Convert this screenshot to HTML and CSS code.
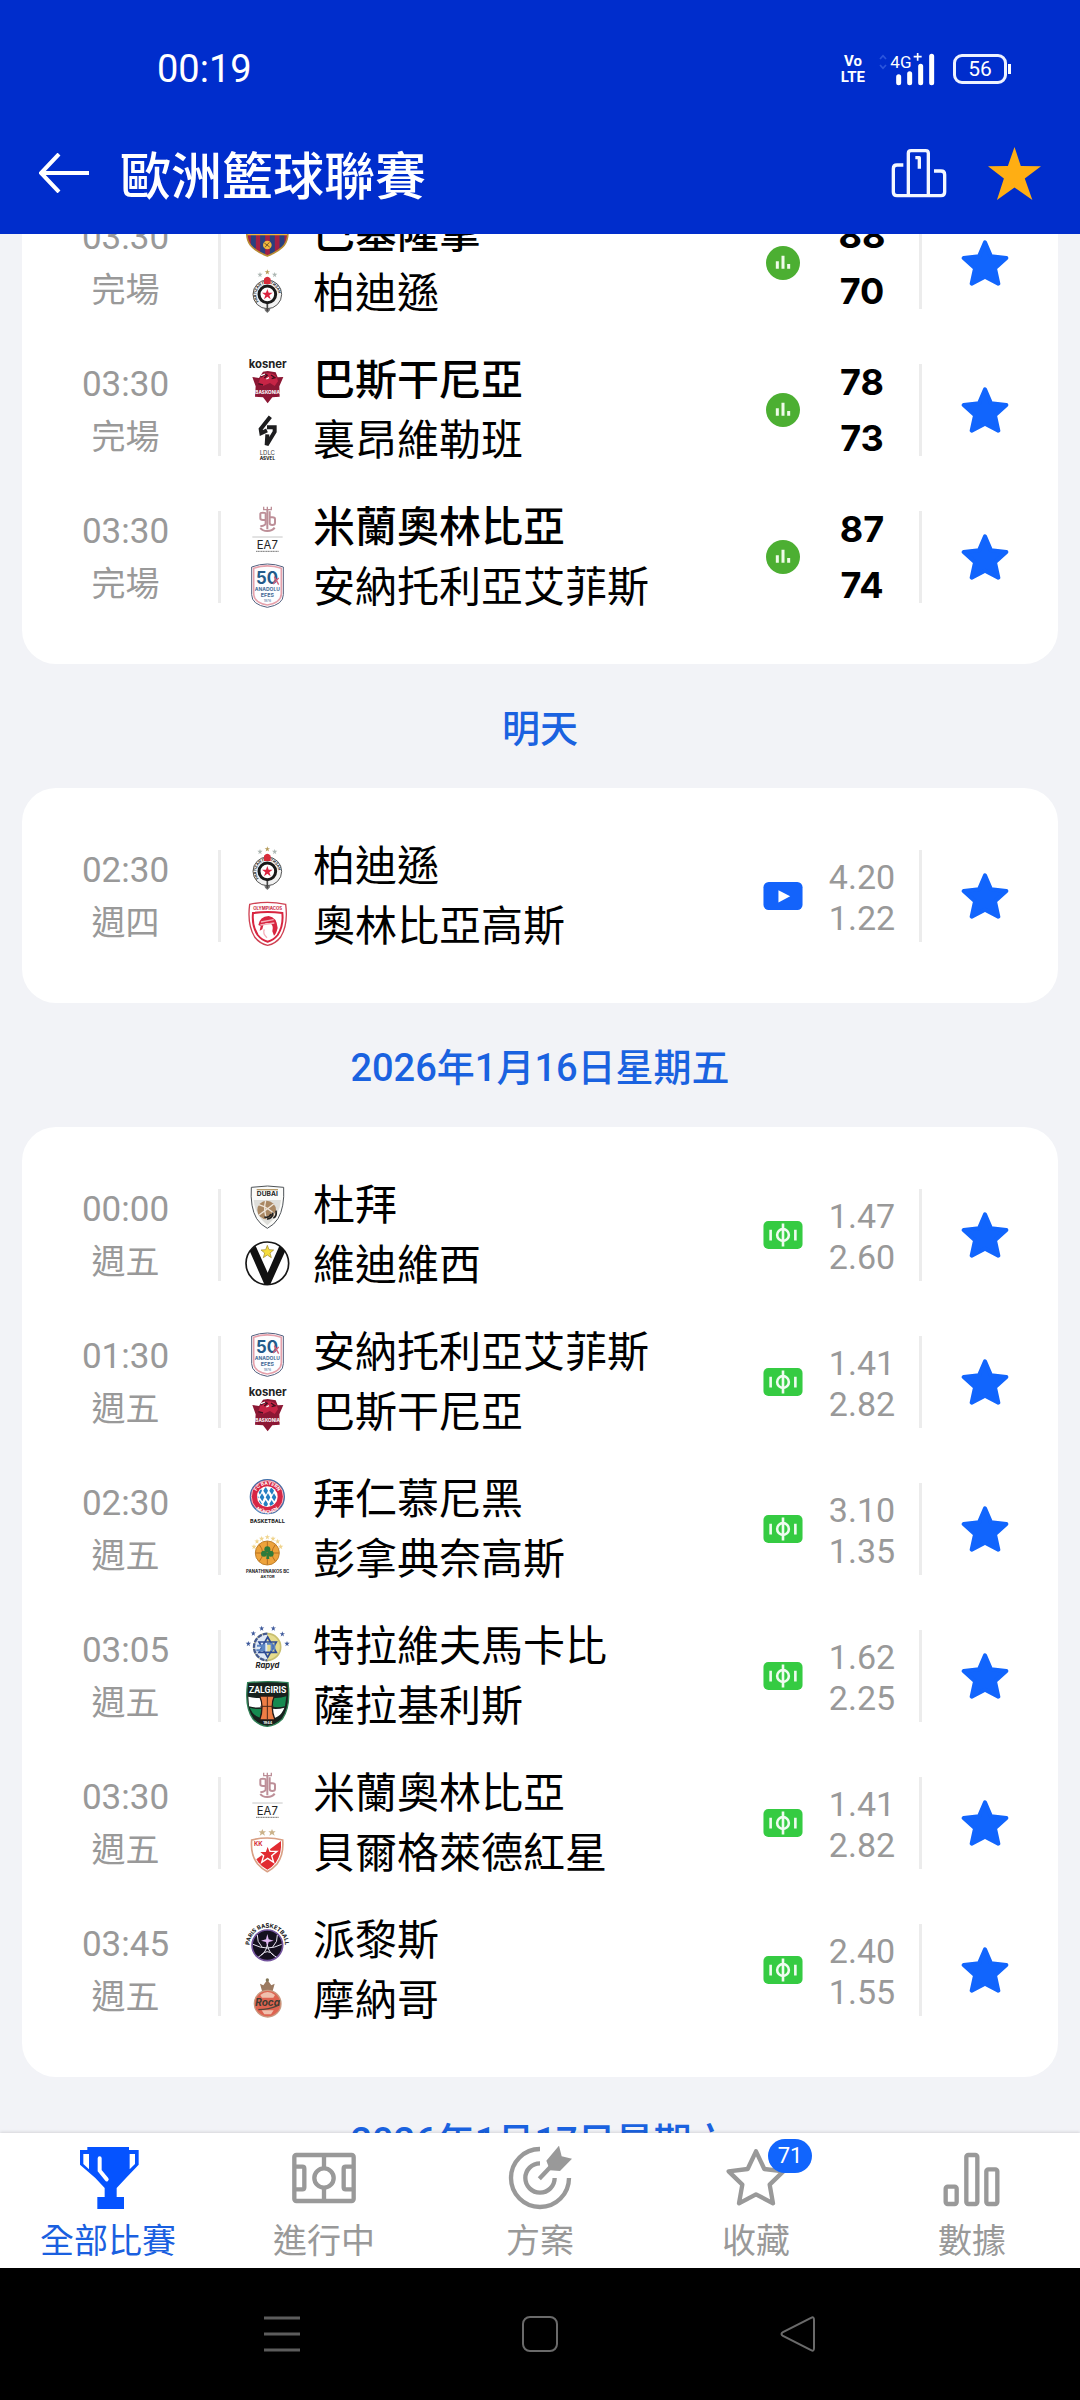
FILE: index.html
```html
<!DOCTYPE html>
<html lang="zh-Hant">
<head>
<meta charset="utf-8">
<meta name="viewport" content="width=device-width, initial-scale=1">
<title>歐洲籃球聯賽</title>
<link rel="stylesheet" href="styles.css">
</head>
<body>
<svg class="sprite" aria-hidden="true">
  <defs>
    <path id="tiny-star" d="M0-8 2-2.500 8-2.500 3 1.500 5 7.500 0 4-5 7.500-3 1.500-8-2.500-2-2.500Z"/>
    <path id="arc-paris" d="M21 105A53 53 0 1 1 113 105"/>
    <path id="arc-bayern-top" d="M31 56A36 36 0 0 1 103 56"/>
    <path id="arc-bayern-bottom" d="M20 60A47 47 0 0 0 114 60"/>
    <path id="arc-partizan" d="M41 100A33 33 0 1 1 93 100"/>
    <clipPath id="clip-barca"><path d="M24 0Q67 14 110 0L130 26Q122 40 128 54C132 92 116 112 67 132C18 112 2 92 6 54Q12 40 4 26Z"/></clipPath>
    <clipPath id="clip-bayern"><circle cx="67" cy="56" r="29"/></clipPath>
    <clipPath id="clip-zalgiris"><path d="M10 8Q67 2 126 8Q136 78 108 112Q90 128 67 130Q44 128 28 112Q0 78 10 8Z"/></clipPath>
  </defs>
  <symbol id="star" viewBox="0 0 144 144">
    <path d="M72 10 90 52 136 57 102 88 112 134 72 113 32 134 42 88 8 57 54 52Z" fill="currentColor" stroke="currentColor" stroke-width="12" stroke-linejoin="round"/>
  </symbol>
  <symbol id="stats" viewBox="0 0 102 102">
    <circle cx="51" cy="51" r="51" fill="#4caf32"/>
    <path d="M34 46v22M51 29v39M68 54v14" stroke="#effbe9" stroke-width="9"/>
  </symbol>
  <symbol id="pitch" viewBox="0 0 120 86">
    <rect width="120" height="86" rx="15" fill="#35cb42"/>
    <path d="M22 27v33M98 27v33M60 8v70" stroke="#effcf0" stroke-width="8"/>
    <circle cx="60" cy="43" r="18" fill="none" stroke="#effcf0" stroke-width="8"/>
  </symbol>
  <symbol id="video" viewBox="0 0 120 86">
    <rect width="120" height="86" rx="16" fill="#1363fb"/>
    <path d="M46 25 82 44 46 63Z" fill="#fff"/>
  </symbol>
</svg>

<header class="top">
  <div class="status">
    <span class="clock">00:19</span>
    <div class="status-icons">
      <span class="volte"><span>Vo</span><span>LTE</span></span>
      <svg class="signal" viewBox="0 0 168 96" role="img" aria-label="4G+">
        <path d="M3 18l9-10 9 10M3 36l9 10 9-10" fill="none" stroke="#2b55dc" stroke-width="5"/>
        <text class="signal-text" x="34" y="44" font-size="51">4G</text>
        <path d="M104 11h24M116 0v23" stroke="#fff" stroke-width="5"/>
        <path d="M59 71v18M92 62v27M125 40v49M158 10v79" stroke="#fff" stroke-width="15" stroke-linecap="round"/>
      </svg>
      <span class="battery">56</span>
    </div>
  </div>
  <div class="title-bar">
    <button aria-label="返回"><svg class="back" viewBox="0 0 50 40"><path d="M20 1 2 20 20 39M3 20H50" fill="none" stroke="#fff" stroke-width="4"/></svg></button>
    <h1>歐洲籃球聯賽</h1>
    <button aria-label="排名"><svg class="podium" viewBox="0 0 168 153"><g fill="none" stroke="#f4f7ff" stroke-width="10" stroke-linejoin="round"><path d="M37 51H18Q7 51 7 62V132Q7 143 18 143H150Q161 143 161 132V80Q161 69 150 69H129"/><path d="M52 143V16Q52 8 60 8H104Q112 8 112 16V143"/><path d="M73 29H85V62"/></g></svg></button>
    <button aria-label="收藏聯賽"><svg class="league-star" viewBox="0 0 160 160"><path d="M80 0 99 57 160 58 111 95 134 160 80 122 27 160 48 95 0 58 60 57Z" fill="#ffae13"/></svg></button>
  </div>
</header>

<main class="feed">
  <section class="card feed-start">
    <ul>
      <li class="match">
        <div class="when"><time>03:30</time><span>完場</span></div>
        <div class="logos">
          <svg viewBox="0 0 138 138">
            <g clip-path="url(#clip-barca)">
              <path fill="#a32045" d="M0 0h138v138H0z"/>
              <path stroke="#29407f" stroke-width="15" d="M25 64v74M53 64v74M82 64v74M111 64v74"/>
              <path fill="#efb73b" d="M0 44h138v26H0z"/>
              <path d="M28 58h78" stroke="#23356f" stroke-width="8" stroke-dasharray="13 6"/>
              <circle cx="67" cy="99" r="13" fill="#f0b93c"/>
              <path d="M58 93l16 12M60 106l13-15" stroke="#79582a" stroke-width="3"/>
            </g>
            <path d="M24 0Q67 14 110 0L130 26Q122 40 128 54C132 92 116 112 67 132C18 112 2 92 6 54Q12 40 4 26Z" fill="none" stroke="#b98c32" stroke-width="5"/>
          </svg>
          <svg viewBox="0 0 138 138">
            <use href="#tiny-star" x="45" y="20" fill="#aeb8b4"/><use href="#tiny-star" x="89" y="20" fill="#aeb8b4"/><use href="#tiny-star" x="67" y="12" fill="#b59b5b"/>
            <path d="M56 116h22l-4 12-7 7-7-7Z" fill="#7b7b7b"/>
            <circle cx="67" cy="79" r="43" fill="#f2f2f2" stroke="#555" stroke-width="3"/>
            <text class="logo-text" font-size="11" font-weight="700" fill="#222"><textPath href="#arc-partizan">PARTIZAN ПАРТИЗАН</textPath></text>
            <circle cx="67" cy="79" r="25" fill="#fff" stroke="#191919" stroke-width="9"/>
            <path d="M67 63 71 74 83 74 73 82 77 94 67 86 57 94 61 82 51 74 63 74Z" fill="#da2440"/>
            <path d="M57 32q10-12 20 0v16H57Z" fill="#d72c3a"/>
            <path d="M67 108v22" stroke="#444" stroke-width="5"/>
          </svg>
        </div>
        <div class="teams"><strong>巴塞隆拿</strong><span>柏迪遜</span></div>
        <svg class="badge-icon stats"><use href="#stats"/></svg>
        <div class="score"><span>88</span><span>70</span></div>
        <div class="favourite"><button aria-label="收藏"><svg><use href="#star"/></svg></button></div>
      </li>
      <li class="match">
        <div class="when"><time>03:30</time><span>完場</span></div>
        <div class="logos">
          <svg viewBox="0 0 138 138">
            <text class="logo-text" x="68" y="28" font-size="34" font-weight="700" fill="#222" text-anchor="middle">kosner</text>
            <path d="M22 54 42 57 54 38 68 36 92 40 98 55 115 54 103 82 104 113 82 115 68 133 54 115 30 113 32 82Z" fill="#8c1734"/>
            <path d="M46 56q10-15 28-13 22 2 25 24l-10 14-14-9-23 10-12-8Z" fill="#c72546"/>
            <path d="M48 54q12-11 19-5l-9 8M78 48l12 8-10 3M40 74l14 4" fill="none" stroke="#401020" stroke-width="4"/>
            <path d="M48 50l12-5M64 60l8-4" stroke="#fff" stroke-width="4"/>
            <text class="logo-text" x="68" y="105" font-size="14" font-weight="700" fill="#fff" text-anchor="middle">BASKONIA</text>
          </svg>
          <svg viewBox="0 0 138 138">
            <path d="M76 5 47 42 49 54 66 46" fill="none" stroke="#1d1d1f" stroke-width="12"/>
            <path d="M66 37H89V50L65 90 67 58" fill="none" stroke="#1d1d1f" stroke-width="12"/>
            <text class="logo-text" x="67" y="120" font-size="18" fill="#444" text-anchor="middle">LDLC</text>
            <text class="logo-text" x="67" y="136" font-size="14" font-weight="700" fill="#111" text-anchor="middle">ASVEL</text>
          </svg>
        </div>
        <div class="teams"><strong>巴斯干尼亞</strong><span>裏昂維勒班</span></div>
        <svg class="badge-icon stats"><use href="#stats"/></svg>
        <div class="score"><span>78</span><span>73</span></div>
        <div class="favourite"><button aria-label="收藏"><svg><use href="#star"/></svg></button></div>
      </li>
      <li class="match">
        <div class="when"><time>03:30</time><span>完場</span></div>
        <div class="logos">
          <svg viewBox="0 0 138 138">
            <g fill="none" stroke="#bd8f98" stroke-width="6">
              <path d="M62 36V23q0-3-8-3t-8 3v14q0 5 8 5h8v-8M62 36v16q0 7-16 9"/>
              <path d="M74 16v35q0 6 8 6t8-6V39q0-5-8-5h-8"/>
              <path d="M67 12v58M46 66q6 9 21 9t22-10"/>
              <path d="M56 2v9h23V2M67 2v10" stroke-width="4"/>
            </g>
            <path d="M22 93h91" stroke="#aaa" stroke-width="2"/>
            <text class="logo-text" x="67" y="128" font-size="34" fill="#222" text-anchor="middle">EA7</text>
            <path d="M33 136h68" stroke="#777" stroke-width="3" stroke-dasharray="4 1"/>
          </svg>
          <svg viewBox="0 0 138 138">
            <path d="M20 15Q67-3 115 15V98Q115 128 67 136Q20 128 20 98Z" fill="#fff" stroke="#54607f" stroke-width="3"/>
            <path d="M26 19Q67 4 109 19V96Q108 122 67 129Q27 122 26 96Z" fill="#fcfdff" stroke="#e5a0ab" stroke-width="5"/>
            <text class="logo-text" x="66" y="67" font-size="50" font-weight="700" fill="#245b8a" text-anchor="middle">50</text>
            <path d="M88 44 101 68M84 66 101 48" stroke="#d55d78" stroke-width="4"/>
            <text class="logo-text" x="67" y="88" font-size="15" font-weight="700" fill="#456a96" text-anchor="middle">ANADOLU</text>
            <text class="logo-text" x="67" y="106" font-size="16" font-weight="700" fill="#456a96" text-anchor="middle">EFES</text>
            <text class="logo-text" x="67" y="121" font-size="10" fill="#456a96" text-anchor="middle">1976</text>
          </svg>
        </div>
        <div class="teams"><strong>米蘭奧林比亞</strong><span>安納托利亞艾菲斯</span></div>
        <svg class="badge-icon stats"><use href="#stats"/></svg>
        <div class="score"><span>87</span><span>74</span></div>
        <div class="favourite"><button aria-label="收藏"><svg><use href="#star"/></svg></button></div>
      </li>
    </ul>
  </section>

  <h2>明天</h2>
  <section class="card">
    <ul>
      <li class="match">
        <div class="when"><time>02:30</time><span>週四</span></div>
        <div class="logos">
          <svg viewBox="0 0 138 138">
            <use href="#tiny-star" x="45" y="20" fill="#aeb8b4"/><use href="#tiny-star" x="89" y="20" fill="#aeb8b4"/><use href="#tiny-star" x="67" y="12" fill="#b59b5b"/>
            <path d="M56 116h22l-4 12-7 7-7-7Z" fill="#7b7b7b"/>
            <circle cx="67" cy="79" r="43" fill="#f2f2f2" stroke="#555" stroke-width="3"/>
            <text class="logo-text" font-size="11" font-weight="700" fill="#222"><textPath href="#arc-partizan">PARTIZAN ПАРТИЗАН</textPath></text>
            <circle cx="67" cy="79" r="25" fill="#fff" stroke="#191919" stroke-width="9"/>
            <path d="M67 63 71 74 83 74 73 82 77 94 67 86 57 94 61 82 51 74 63 74Z" fill="#da2440"/>
            <path d="M57 32q10-12 20 0v16H57Z" fill="#d72c3a"/>
            <path d="M67 108v22" stroke="#444" stroke-width="5"/>
          </svg>
          <svg viewBox="0 0 138 138">
            <path d="M14 10Q67-2 122 10Q130 70 107 108Q92 128 68 133Q44 128 29 108Q6 70 14 10Z" fill="#fff" stroke="#cf4253" stroke-width="4"/>
            <text class="logo-text" x="68" y="26" font-size="13" font-weight="700" fill="#c9253c" text-anchor="middle">OLYMPIACOS</text>
            <path d="M24 36Q68 30 112 36Q116 74 98 102Q86 117 68 122Q50 117 38 102Q20 74 24 36Z" fill="#fff" stroke="#d82640" stroke-width="6"/>
            <path d="M40 72q4-25 31-27 24 3 27 36-4 17-11 23l-5-13q5-20-8-24-12-4-19 6l-3 12-8 4 3-14Z" fill="#d82640"/>
            <path d="M48 63l38-7M46 72l42-6M58 85q-6 12 8 25" fill="none" stroke="#f4b0ba" stroke-width="4"/>
          </svg>
        </div>
        <div class="teams"><span>柏迪遜</span><span>奧林比亞高斯</span></div>
        <svg class="badge-icon"><use href="#video"/></svg>
        <div class="odds"><span>4.20</span><span>1.22</span></div>
        <div class="favourite"><button aria-label="收藏"><svg><use href="#star"/></svg></button></div>
      </li>
    </ul>
  </section>

  <h2>2026年1月16日星期五</h2>
  <section class="card">
    <ul>
      <li class="match">
        <div class="when"><time>00:00</time><span>週五</span></div>
        <div class="logos">
          <svg viewBox="0 0 138 138">
            <path d="M19 10Q68 2 116 10Q119 70 99 104Q88 122 67 133Q46 122 35 104Q15 70 19 10Z" fill="#fbfbf9" stroke="#4d5257" stroke-width="3"/>
            <path d="M35 17h64" stroke="#b79d6d" stroke-width="4"/>
            <text class="logo-text" x="67" y="36" font-size="20" font-weight="700" fill="#222" text-anchor="middle">DUBAI</text>
            <path d="M26 48h82q-3 44-41 76-38-32-41-76Z" fill="#dededa"/>
            <circle cx="65" cy="78" r="28" fill="#a98762"/>
            <path d="M41 62q30 9 51 32M62 50q-8 29 4 56M86 60Q66 76 42 93" fill="none" stroke="#efe5d8" stroke-width="4"/>
            <path d="M58 99q14 4 20-9M84 86q-3 20-18 19M93 80q3 18-8 22" fill="none" stroke="#222" stroke-width="5"/>
          </svg>
          <svg viewBox="0 0 138 138">
            <circle cx="67" cy="70" r="64" fill="#fff" stroke="#171717" stroke-width="5"/>
            <path d="M14 33 32 18 68 98 103 18 121 33 75 135H59Z" fill="#111"/>
            <path d="M67 16 72 29 86 30 75 39 79 53 67 45 55 53 59 39 48 30 62 29Z" fill="#f6dd3c" stroke="#9b8426" stroke-width="2"/>
          </svg>
        </div>
        <div class="teams"><span>杜拜</span><span>維迪維西</span></div>
        <svg class="badge-icon"><use href="#pitch"/></svg>
        <div class="odds"><span>1.47</span><span>2.60</span></div>
        <div class="favourite"><button aria-label="收藏"><svg><use href="#star"/></svg></button></div>
      </li>
      <li class="match">
        <div class="when"><time>01:30</time><span>週五</span></div>
        <div class="logos">
          <svg viewBox="0 0 138 138">
            <path d="M20 15Q67-3 115 15V98Q115 128 67 136Q20 128 20 98Z" fill="#fff" stroke="#54607f" stroke-width="3"/>
            <path d="M26 19Q67 4 109 19V96Q108 122 67 129Q27 122 26 96Z" fill="#fcfdff" stroke="#e5a0ab" stroke-width="5"/>
            <text class="logo-text" x="66" y="67" font-size="50" font-weight="700" fill="#245b8a" text-anchor="middle">50</text>
            <path d="M88 44 101 68M84 66 101 48" stroke="#d55d78" stroke-width="4"/>
            <text class="logo-text" x="67" y="88" font-size="15" font-weight="700" fill="#456a96" text-anchor="middle">ANADOLU</text>
            <text class="logo-text" x="67" y="106" font-size="16" font-weight="700" fill="#456a96" text-anchor="middle">EFES</text>
            <text class="logo-text" x="67" y="121" font-size="10" fill="#456a96" text-anchor="middle">1976</text>
          </svg>
          <svg viewBox="0 0 138 138">
            <text class="logo-text" x="68" y="28" font-size="34" font-weight="700" fill="#222" text-anchor="middle">kosner</text>
            <path d="M22 54 42 57 54 38 68 36 92 40 98 55 115 54 103 82 104 113 82 115 68 133 54 115 30 113 32 82Z" fill="#8c1734"/>
            <path d="M46 56q10-15 28-13 22 2 25 24l-10 14-14-9-23 10-12-8Z" fill="#c72546"/>
            <path d="M48 54q12-11 19-5l-9 8M78 48l12 8-10 3M40 74l14 4" fill="none" stroke="#401020" stroke-width="4"/>
            <path d="M48 50l12-5M64 60l8-4" stroke="#fff" stroke-width="4"/>
            <text class="logo-text" x="68" y="105" font-size="14" font-weight="700" fill="#fff" text-anchor="middle">BASKONIA</text>
          </svg>
        </div>
        <div class="teams"><span>安納托利亞艾菲斯</span><span>巴斯干尼亞</span></div>
        <svg class="badge-icon"><use href="#pitch"/></svg>
        <div class="odds"><span>1.41</span><span>2.82</span></div>
        <div class="favourite"><button aria-label="收藏"><svg><use href="#star"/></svg></button></div>
      </li>
      <li class="match">
        <div class="when"><time>02:30</time><span>週五</span></div>
        <div class="logos">
          <svg viewBox="0 0 138 138">
            <circle cx="67" cy="56" r="51" fill="#d72645" stroke="#4271aa" stroke-width="4"/>
            <circle cx="67" cy="56" r="48" fill="none" stroke="#fff" stroke-width="2"/>
            <text class="logo-text" font-size="14" font-weight="700" fill="#fff"><textPath href="#arc-bayern-top" startOffset="50%" text-anchor="middle">FC BAYERN</textPath></text>
            <text class="logo-text" font-size="14" font-weight="700" fill="#fff"><textPath href="#arc-bayern-bottom" startOffset="50%" text-anchor="middle">MÜNCHEN</textPath></text>
            <circle cx="67" cy="56" r="31" fill="#fff"/>
            <g clip-path="url(#clip-bayern)" fill="#247fc2">
              <path d="M44 26l7 12-6 12-8-12ZM62 26l7 12-6 12-8-12ZM80 26l7 12-6 12-8-12ZM51 46l7 12-6 12-8-12ZM69 46l7 12-6 12-8-12ZM87 46l7 12-6 12-8-12ZM34 46l7 12-6 12-8-12ZM44 66l7 12-6 12-8-12ZM62 66l7 12-6 12-8-12ZM80 66l7 12-6 12-8-12Z"/>
            </g>
            <text class="logo-text-plain" x="67" y="134" font-size="17" font-weight="700" fill="#222" text-anchor="middle">BASKETBALL</text>
          </svg>
          <svg viewBox="0 0 138 138">
            <g fill="#f0d48c"><use href="#tiny-star" x="27" y="38"/><use href="#tiny-star" x="36" y="22"/><use href="#tiny-star" x="50" y="14"/><use href="#tiny-star" x="67" y="9"/><use href="#tiny-star" x="84" y="14"/><use href="#tiny-star" x="98" y="22"/><use href="#tiny-star" x="107" y="38"/></g>
            <circle cx="67" cy="57" r="36" fill="#eea33b" stroke="#bf812d" stroke-width="3"/>
            <path d="M67 22v70M32 57h70M43 32q20 25 0 50M91 32q-20 25 0 50" fill="none" stroke="#b56e20" stroke-width="3"/>
            <g fill="#2f7b3b"><circle cx="67" cy="46" r="9"/><circle cx="57" cy="59" r="9"/><circle cx="77" cy="59" r="9"/><path d="M65 56h5l3 19h-9Z"/></g>
            <text class="logo-text" x="68" y="118" font-size="13" font-weight="700" fill="#222" text-anchor="middle">PANATHINAIKOS BC</text>
            <text class="logo-text" x="68" y="133" font-size="12" font-weight="700" fill="#222" text-anchor="middle">AKTOR</text>
          </svg>
        </div>
        <div class="teams"><span>拜仁慕尼黑</span><span>彭拿典奈高斯</span></div>
        <svg class="badge-icon"><use href="#pitch"/></svg>
        <div class="odds"><span>3.10</span><span>1.35</span></div>
        <div class="favourite"><button aria-label="收藏"><svg><use href="#star"/></svg></button></div>
      </li>
      <li class="match">
        <div class="when"><time>03:05</time><span>週五</span></div>
        <div class="logos">
          <svg viewBox="0 0 138 138">
            <g fill="#3f5a9c"><use href="#tiny-star" x="10" y="56"/><use href="#tiny-star" x="25" y="25"/><use href="#tiny-star" x="50" y="10"/><use href="#tiny-star" x="85" y="10"/><use href="#tiny-star" x="112" y="27"/><use href="#tiny-star" x="126" y="56"/></g>
            <circle cx="67" cy="66" r="40" fill="#e6dc8e" stroke="#c9bf6f" stroke-width="5"/>
            <path d="M67 26A40 40 0 0 0 67 106Z" fill="#dfe8f5"/>
            <path d="M67 26A40 40 0 0 0 67 106" fill="none" stroke="#455a8e" stroke-width="7" stroke-dasharray="14 3"/>
            <path d="M68 36 94 82H42ZM68 97 42 51H94Z" fill="none" stroke="#2f4b93" stroke-width="5"/>
            <path d="M36 62h16v14H34M58 56v22M66 56h14v22M88 56v20" fill="none" stroke="#5d86c4" stroke-width="6"/>
            <text class="logo-text" x="67" y="130" font-size="23" font-weight="700" font-style="italic" fill="#222" text-anchor="middle">Rapyd</text>
          </svg>
          <svg viewBox="0 0 138 138">
            <path d="M8 5Q67-1 129 5Q138 78 112 114Q92 134 67 136Q42 134 24 114Q-2 78 8 5Z" fill="#17211d" stroke="#2f8055" stroke-width="4"/>
            <g clip-path="url(#clip-zalgiris)">
              <path d="M10 47q30 8 57 1v26q-30 10-55 2Z" fill="#fff"/><path d="M67 48q30 7 57-2l-4 30q-26 6-53-2Z" fill="#168a50"/>
              <path d="M14 80q26 8 53 0v34Q28 114 14 80Z" fill="#168a50"/><path d="M67 80q26 8 51 0-12 34-51 34Z" fill="#fff"/>
              <path d="M44 45h44q-14 32 2 72H44q14-40 0-72Z" fill="#ed7d45" stroke="#231a17" stroke-width="4"/>
              <path d="M67 45v70M46 76h40" stroke="#4c2a1c" stroke-width="3"/>
            </g>
            <text class="logo-text-plain" x="68" y="36" font-size="26" font-weight="700" fill="#fff" text-anchor="middle">ZALGIRIS</text>
            <text class="logo-text" x="68" y="129" font-size="11" font-weight="700" fill="#fff" text-anchor="middle">1944</text>
          </svg>
        </div>
        <div class="teams"><span>特拉維夫馬卡比</span><span>薩拉基利斯</span></div>
        <svg class="badge-icon"><use href="#pitch"/></svg>
        <div class="odds"><span>1.62</span><span>2.25</span></div>
        <div class="favourite"><button aria-label="收藏"><svg><use href="#star"/></svg></button></div>
      </li>
      <li class="match">
        <div class="when"><time>03:30</time><span>週五</span></div>
        <div class="logos">
          <svg viewBox="0 0 138 138">
            <g fill="none" stroke="#bd8f98" stroke-width="6">
              <path d="M62 36V23q0-3-8-3t-8 3v14q0 5 8 5h8v-8M62 36v16q0 7-16 9"/>
              <path d="M74 16v35q0 6 8 6t8-6V39q0-5-8-5h-8"/>
              <path d="M67 12v58M46 66q6 9 21 9t22-10"/>
              <path d="M56 2v9h23V2M67 2v10" stroke-width="4"/>
            </g>
            <path d="M22 93h91" stroke="#aaa" stroke-width="2"/>
            <text class="logo-text" x="67" y="128" font-size="34" fill="#222" text-anchor="middle">EA7</text>
            <path d="M33 136h68" stroke="#777" stroke-width="3" stroke-dasharray="4 1"/>
          </svg>
          <svg viewBox="0 0 138 138">
            <path d="M52 3 55 10 63 10 57 15 60 23 52 18 44 23 47 15 41 10 49 10ZM81 3 84 10 92 10 86 15 89 23 81 18 73 23 76 15 70 10 78 10Z" fill="#cbb28a"/>
            <path d="M20 36Q67 24 113 36Q117 80 96 108Q84 122 67 131Q50 122 38 108Q16 80 20 36Z" fill="#fff" stroke="#d9a085" stroke-width="5"/>
            <path d="M108 39Q111 78 92 104Q82 117 67 125Q50 117 40 103L34 94Z" fill="#e12b31"/>
            <path d="M68 51 75 70 96 70 80 83 86 103 68 91 50 103 56 83 40 70 61 70Z" fill="#e12b31" stroke="#fff" stroke-width="4"/>
            <text class="logo-text" x="40" y="55" font-size="18" font-weight="700" fill="#d42a33" text-anchor="middle">KK</text>
          </svg>
        </div>
        <div class="teams"><span>米蘭奧林比亞</span><span>貝爾格萊德紅星</span></div>
        <svg class="badge-icon"><use href="#pitch"/></svg>
        <div class="odds"><span>1.41</span><span>2.82</span></div>
        <div class="favourite"><button aria-label="收藏"><svg><use href="#star"/></svg></button></div>
      </li>
      <li class="match">
        <div class="when"><time>03:45</time><span>週五</span></div>
        <div class="logos">
          <svg viewBox="0 0 138 138">
            <text class="logo-text" font-size="17" font-weight="700" fill="#141414"><textPath href="#arc-paris" startOffset="50%" text-anchor="middle">PARIS BASKETBALL</textPath></text>
            <circle cx="67" cy="79" r="46" fill="#15101f" stroke="#73549d" stroke-width="5"/>
            <path d="M67 45l4 16 15 4-15 4-4 16-4-16-15-4 15-4Z" fill="#e0b8f2"/>
            <path d="M24 76q43 22 86 0M37 48q-2 20 14 36M97 48q2 20-14 36M67 78q-5 26-27 36M67 78q5 26 27 36M48 108q19-20 38 0" fill="none" stroke="#e8e5f0" stroke-width="3"/>
          </svg>
          <svg viewBox="0 0 138 138">
            <path d="M45 26l10 5 12-17 12 17 10-5-6 22H51Z" fill="#9c7a61"/><circle cx="67" cy="15" r="5" fill="#817557"/>
            <circle cx="68" cy="86" r="40" fill="#de6350" stroke="#c99a80" stroke-width="4"/>
            <path d="M46 60q22-18 44 0l-5 8H51ZM50 106h36l-8 12H58Z" fill="#f0c0ad"/>
            <path d="M40 104Q72 104 98 92" fill="none" stroke="#51463a" stroke-width="4"/>
            <text class="logo-text" x="68" y="94" font-size="30" font-weight="700" font-style="italic" fill="#403b31" text-anchor="middle">Roca</text>
          </svg>
        </div>
        <div class="teams"><span>派黎斯</span><span>摩納哥</span></div>
        <svg class="badge-icon"><use href="#pitch"/></svg>
        <div class="odds"><span>2.40</span><span>1.55</span></div>
        <div class="favourite"><button aria-label="收藏"><svg><use href="#star"/></svg></button></div>
      </li>
    </ul>
  </section>

  <h2>2026年1月17日星期六</h2>
</main>

<nav class="tabs">
  <a class="tab active" href="#all">
    <svg viewBox="0 0 192 192"><path d="M34 3H159V12H188V56L150 96 122 126V153H144V189H64V153H86V126L58 96 12 56V12H34Z" fill="#0553ff"/><path d="M22 24H39V70L22 54ZM161 24H177V54L161 70Z" fill="#fff"/><path d="M71 37V74L92 100" fill="none" stroke="#fff" stroke-width="12" stroke-linecap="round"/></svg>
    <span>全部比賽</span>
  </a>
  <a class="tab" href="#live">
    <svg viewBox="0 0 192 192"><g fill="none" stroke="#999" stroke-width="13"><rect x="7" y="27" width="178" height="138" rx="6"/><path d="M96 27V63M96 129V165M7 62H31Q37 62 37 68V124Q37 130 31 130H7M185 62H161Q155 62 155 68V124Q155 130 161 130H185"/><circle cx="96" cy="96" r="29"/></g></svg>
    <span>進行中</span>
  </a>
  <a class="tab" href="#tips">
    <svg viewBox="0 0 192 192"><g fill="none" stroke="#999" stroke-width="13"><path d="M96 9A87 87 0 1 0 183 96"/><path d="M96 52A44 44 0 1 0 140 96"/><path d="M94 98 128 62"/></g><path d="M115 44 153-1 161 31 192 38 156 75 126 73Z" fill="#999"/></svg>
    <span>方案</span>
  </a>
  <a class="tab" href="#favourites">
    <div class="tab-icon">
      <svg viewBox="0 0 192 192"><path d="M96 16 121 69 178 76 137 116 147 172 96 145 45 172 55 116 14 76 71 69Z" fill="none" stroke="#999" stroke-width="13" stroke-linejoin="round"/></svg>
      <span class="count">71</span>
    </div>
    <span>收藏</span>
  </a>
  <a class="tab" href="#data">
    <svg viewBox="0 0 192 192"><g fill="none" stroke="#999" stroke-width="13"><rect x="17" y="122" width="33" height="52" rx="6"/><rect x="79" y="27" width="33" height="147" rx="6"/><rect x="139" y="70" width="33" height="104" rx="6"/></g></svg>
    <span>數據</span>
  </a>
</nav>

<footer class="system">
  <button aria-label="最近"><svg viewBox="0 0 36 36"><path d="M0 2H36M0 18H36M0 34H36" stroke="#5c5c5c" stroke-width="3"/></svg></button>
  <button aria-label="主畫面"><svg viewBox="0 0 36 36"><rect x="1" y="1" width="34" height="34" rx="7" fill="none" stroke="#6a6a6a" stroke-width="2"/></svg></button>
  <button aria-label="上一頁"><svg viewBox="0 0 36 36"><path d="M31 2Q34 0 34 4V32Q34 36 31 34L3 20Q0 18 3 16Z" fill="none" stroke="#6a6a6a" stroke-width="2"/></svg></button>
</footer>
</body>
</html>
```

FILE: styles.css
```css
* { box-sizing: border-box; }

body {
  margin: 0;
  height: 100vh;
  display: flex;
  flex-direction: column;
  overflow: hidden;
  background: #f2f3f7;
  color: #000;
  font-family: Roboto, "Noto Sans CJK TC", sans-serif;
}

.sprite { position: absolute; width: 0; height: 0; }
.logo-text { font-family: Inter, sans-serif; }
.logo-text-plain { font-family: Roboto, sans-serif; }

button {
  border: 0;
  padding: 0;
  background: none;
  color: inherit;
  cursor: pointer;
}
svg { display: block; flex: none; }
ul { list-style: none; margin: 0; padding: 0; }

/* Header */
.top { flex: none; background: #002dcc; color: #fff; }

.status {
  display: flex;
  justify-content: space-between;
  align-items: center;
  height: 138px;
  padding: 0 68px 0 157px;
}
.clock { font-size: 38px; line-height: 40px; }
.status-icons { display: flex; align-items: center; }
.volte {
  display: flex;
  flex-direction: column;
  font: 700 15px/16px Roboto, sans-serif;
}
.volte span { text-align: center; }
.signal { width: 56px; height: 32px; margin: 0 18px 0 14px; overflow: visible; }
.signal-text { fill: #fff; font-family: Roboto, sans-serif; }
.battery {
  position: relative;
  width: 54px;
  height: 30px;
  border: 3px solid #eef2ff;
  border-radius: 9px;
  font-size: 21px;
  line-height: 24px;
  text-align: center;
  margin-right: 5px;
}
.battery::after {
  content: "";
  position: absolute;
  right: -7px;
  top: 7px;
  width: 3px;
  height: 10px;
  background: #fff;
}

.title-bar {
  display: flex;
  align-items: center;
  height: 96px;
  padding: 0 39px 26px;
}
h1 {
  flex: 1;
  margin: 0 0 0 31px;
  padding-top: 10px;
  font-size: 51px;
  font-weight: 500;
  line-height: 60px;
}
.back { width: 50px; height: 40px; }
.podium { width: 56px; height: 51px; }
.league-star { width: 53px; height: 53px; margin-left: 41px; }

/* Match feed */
.feed { flex: 1; min-height: 0; overflow: hidden; padding: 0 22px; }
.feed-start { margin-top: -79px; }
.card { padding: 34px 0; border-radius: 34px; background: #fff; }

h2 {
  margin: 0;
  padding-top: 6px;
  color: #1a62e0;
  font-size: 38px;
  font-weight: 500;
  line-height: 118px;
  text-align: center;
}

.match { display: flex; align-items: center; height: 147px; }

.when {
  display: flex;
  flex-direction: column;
  justify-content: center;
  width: 199px;
  height: 92px;
  padding: 3px 0 0 11px;
  border-right: 3px solid #ececec;
  color: #999;
  font-size: 34px;
  line-height: 52px;
  text-align: center;
}
.when time { font-size: 35px; }
.logos {
  display: flex;
  flex-direction: column;
  gap: 10px;
  margin: 0 22px 0 24px;
}
.logos svg { width: 46px; height: 46px; overflow: visible; }
.teams {
  flex: 1;
  display: flex;
  flex-direction: column;
  padding-top: 2px;
  font-size: 42px;
  line-height: 60px;
  white-space: nowrap;
}
.teams strong { font-weight: 500; }

.badge-icon { width: 40px; height: 28px; }
.badge-icon.stats { height: 34px; }

.score, .odds {
  display: flex;
  flex-direction: column;
  width: 84px;
  margin: 0 15px 0 17px;
  text-align: center;
}
.score { font: 700 36px/56px Inter, sans-serif; }
.odds { padding-top: 4px; color: #999; font-size: 34px; line-height: 41px; }

.favourite {
  display: flex;
  align-items: center;
  justify-content: center;
  width: 139px;
  height: 92px;
  padding-right: 11px;
  border-left: 3px solid #ececec;
  color: #1165fd;
}
.favourite svg { width: 48px; height: 48px; }

/* Bottom tabs */
.tabs {
  position: relative;
  flex: none;
  display: flex;
  height: 135px;
  background: #fff;
  box-shadow: 0 -1px 3px rgba(0, 0, 0, 0.12);
}
.tab {
  flex: 1;
  display: flex;
  flex-direction: column;
  align-items: center;
  padding-top: 13px;
  color: #999;
  font-size: 34px;
  line-height: 62px;
  text-decoration: none;
}
.tab.active { color: #1a60e0; }
.tab svg { width: 64px; height: 64px; }
.tab-icon { position: relative; }
.count {
  position: absolute;
  left: 44px;
  top: -7px;
  width: 44px;
  height: 34px;
  border-radius: 17px;
  background: #1165fd;
  color: #fff;
  font-size: 22px;
  line-height: 34px;
  text-align: center;
}

/* System navigation */
.system {
  flex: none;
  display: flex;
  justify-content: center;
  gap: 222px;
  height: 132px;
  background: #000;
}
.system svg { width: 36px; height: 36px; }
```
